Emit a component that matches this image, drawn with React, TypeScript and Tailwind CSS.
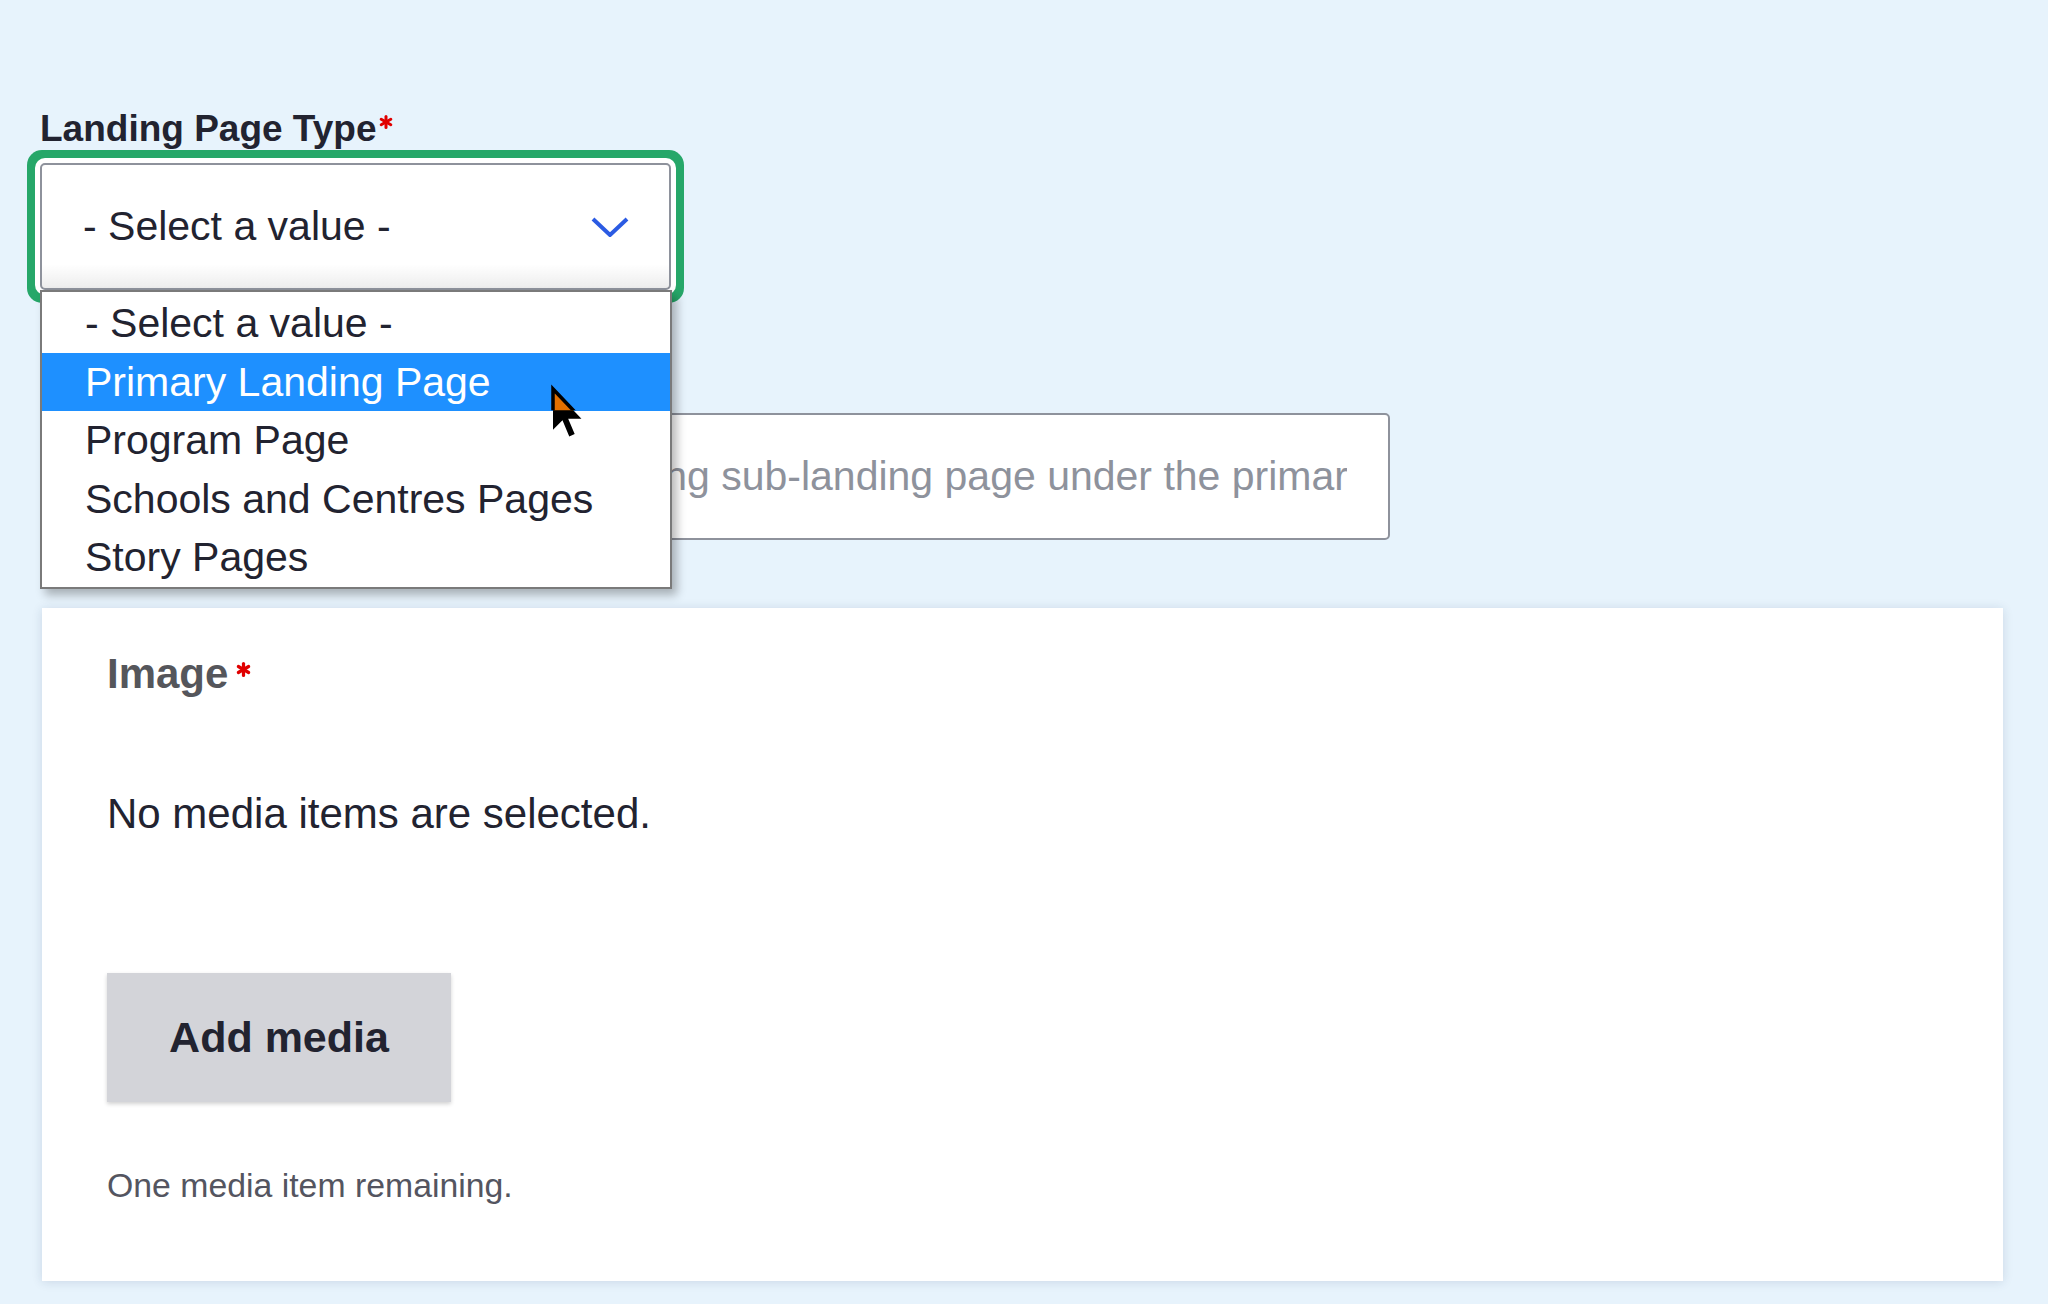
import React from 'react';

const options = ['- Select a value -', 'Primary Landing Page', 'Program Page', 'Schools and Centres Pages', 'Story Pages'];

// red required marker used next to labels
const Required: React.FC<{ size: number; lift: number; gap: number }> = ({ size, lift, gap }) => (
  <span className="inline-block" style={{ marginLeft: gap, verticalAlign: lift }}>
    <svg width={size} height={size} viewBox="0 0 14 14" className="block">
      <g stroke="#e00000" strokeWidth="3" strokeLinecap="round">
        <line x1="7" y1="1.5" x2="7" y2="12.5" />
        <line x1="2.2" y1="4.2" x2="11.8" y2="9.8" />
        <line x1="2.2" y1="9.8" x2="11.8" y2="4.2" />
      </g>
    </svg>
  </span>
);

const Cursor: React.FC = () => {
  const pts = '0,0 0,15 3.5,11.5 6,17.5 8,16.6 5.6,11 10.5,11';
  return (
    <svg width="29" height="48" viewBox="0 0 10.7 17.7" className="absolute left-[511px] top-[36px] overflow-visible">
      <defs>
        <clipPath id="band">
          <rect x="-2" y="-2" width="16" height="9.8" />
        </clipPath>
      </defs>
      <polygon points={pts} fill="#000" />
      <polygon points={pts} fill="#e16f00" stroke="#000" strokeWidth="1.3" strokeLinejoin="miter" clipPath="url(#band)" />
    </svg>
  );
};

export default function App() {
  return (
    <div className="min-h-[1304px] w-full bg-[#e7f3fc] pl-[40px] pt-[107px] font-['Liberation_Sans',Arial,sans-serif]">
      {/* Landing Page Type */}
      <div className="text-[37px] leading-[44px] font-bold text-[#222330]">
        Landing Page Type
        <Required size={14} lift={12} gap={3} />
      </div>

      <div className="relative mt-[12px] w-[631px] h-[127px] bg-white border-2 border-[#8e929c] rounded-[5px] shadow-[0_0_0_5px_#fff,0_0_0_13px_#26a769] flex items-center justify-between pl-[41px] pr-[40px] text-[41px] text-[#222330] z-20">
        <span>- Select a value -</span>
        <svg width="38" height="20" viewBox="0 0 38 20" className="block">
          <polyline points="2,2 19,18 36,2" fill="none" stroke="#2b5be3" strokeWidth="4" strokeLinejoin="miter" />
        </svg>
        <div className="absolute left-0 right-0 bottom-0 h-[24px] bg-linear-to-b from-transparent to-[#00000012]" />

        {/* open option list */}
        <div className="absolute left-[-2px] top-[125px] w-[632px] bg-white border-2 border-[#7a7a7a] pt-[2px] shadow-[5px_6px_9px_rgba(0,0,0,0.28)] text-[41px] leading-[58.5px] text-[#222330]">
          {options.map((opt, i) => (
            <div
              key={opt}
              className={`relative pl-[43px] whitespace-nowrap ${i === 1 ? 'bg-[#1e90ff] text-white' : ''}`}
            >
              {opt}
              {i === 1 && <Cursor />}
            </div>
          ))}
        </div>
      </div>

      {/* second field; its label sits under the open list */}
      <div className="mt-[67px] h-[44px]" />
      <div className="relative z-0 mt-[12px] w-[1350px] h-[127px] bg-white border-2 border-[#8e929c] rounded-[5px] flex items-center overflow-hidden">
        <input
          type="text"
          readOnly
          placeholder="Enter the title of the corresponding sub-landing page under the primary landing page"
          className="w-full h-full bg-transparent pl-[41px] pr-[41px] text-[41px] text-[#222330] placeholder:text-[#8e929c] outline-none"
        />
      </div>

      {/* Image card */}
      <div className="mt-[68px] ml-[2px] w-[1961px] h-[673px] bg-white shadow-[0_1px_10px_rgba(30,50,90,0.14)] pl-[65px] pt-[42px]">
        <div className="text-[42px] leading-[48px] font-bold text-[#55565b]">
          Image
          <Required size={15} lift={11} gap={8} />
        </div>
        <div className="mt-[92px] text-[42px] leading-[48px] text-[#222330]">No media items are selected.</div>
        <button className="mt-[135px] w-[344px] h-[129px] bg-[#d3d4d9] text-[43px] font-bold text-[#222330] shadow-[0_2px_4px_rgba(0,0,0,0.18)] flex items-center justify-center">
          Add media
        </button>
        <div className="mt-[63px] text-[33.8px] leading-[40px] text-[#545560]">One media item remaining.</div>
      </div>
    </div>
  );
}
